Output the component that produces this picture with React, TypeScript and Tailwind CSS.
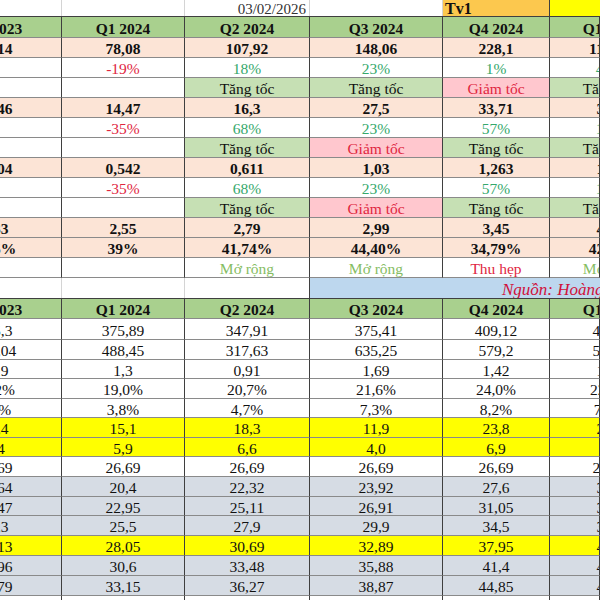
import React from 'react';

type Cell = {
  t?: string;
  bg?: string;
  fg?: string;
};

const COLS = ['w-[62px] shrink-0', 'w-[123px] shrink-0', 'w-[125px] shrink-0', 'w-[133px] shrink-0', 'w-[107px] shrink-0', 'flex-1 min-w-0'];

const GREEN_HDR = 'bg-[#a9d08e]';
const PINK = 'bg-[#fce4d6]';
const UP = 'bg-[#c6e0b4]';
const DOWN = 'bg-[#ffc7ce]';
const YEL = 'bg-[#ffff00]';
const GRAY = 'bg-[#d6dce4]';
const RED = 'text-[#e0263f]';
const TEAL = 'text-[#35a86c]';
const LIME = 'text-[#86bd63]';

const hdr = (first: string): Cell[] =>
  [first, 'Q1 2024', 'Q2 2024', 'Q3 2024', 'Q4 2024', 'Q1 2025'].map((t) => ({ t, bg: GREEN_HDR }));
const pink = (vals: string[]): Cell[] => vals.map((t) => ({ t, bg: PINK }));
const pct = (vals: string[]): Cell[] =>
  vals.map((t) => ({ t, fg: t.startsWith('-') ? RED : TEAL }));
const status = (vals: string[]): Cell[] =>
  vals.map((t) =>
    t === 'Tăng tốc' ? { t, bg: UP } : t === 'Giảm tốc' ? { t, bg: DOWN, fg: RED } : { t }
  );
const plain = (vals: string[], bg?: string): Cell[] => vals.map((t) => ({ t, bg }));

const top: Cell[][] = [
  hdr('Q4 2023'),
  pink(['96,14', '78,08', '107,92', '148,06', '228,1', '115,31']),
  pct(['', '-19%', '18%', '23%', '1%', '48%']),
  status(['', '', 'Tăng tốc', 'Tăng tốc', 'Giảm tốc', 'Tăng tốc']),
  pink(['22,46', '14,47', '16,3', '27,5', '33,71', '38,2']),
  pct(['', '-35%', '68%', '23%', '57%', '13%']),
  status(['', '', 'Tăng tốc', 'Giảm tốc', 'Tăng tốc', 'Tăng tốc']),
  pink(['0,704', '0,542', '0,611', '1,03', '1,263', '1,43']),
  pct(['', '-35%', '68%', '23%', '57%', '13%']),
  status(['', '', 'Tăng tốc', 'Giảm tốc', 'Tăng tốc', 'Tăng tốc']),
  pink(['2,33', '2,55', '2,79', '2,99', '3,45', '4,01']),
  pink(['38,5%', '39%', '41,74%', '44,40%', '34,79%', '42,1%']),
  [{ t: '' }, { t: '' }, { t: 'Mở rộng', fg: LIME }, { t: 'Mở rộng', fg: LIME }, { t: 'Thu hẹp', fg: RED }, { t: 'Mở rộng', fg: LIME }],
];

const bottom: { cells: Cell[]; h: string }[] = [
  { cells: plain(['345,3', '375,89', '347,91', '375,41', '409,12', '415,6']), h: 'h-[21px]' },
  { cells: plain(['402,04', '488,45', '317,63', '635,25', '579,2', '531,8']), h: 'h-[20px]' },
  { cells: plain(['1,19', '1,3', '0,91', '1,69', '1,42', '1,28']), h: 'h-[19px]' },
  { cells: plain(['18,2%', '19,0%', '20,7%', '21,6%', '24,0%', '22,3%']), h: 'h-[20px]' },
  { cells: plain(['3,5%', '3,8%', '4,7%', '7,3%', '8,2%', '7,6%']), h: 'h-[19px]' },
  { cells: plain(['14,4', '15,1', '18,3', '11,9', '23,8', '21,2'], YEL), h: 'h-[20px]' },
  { cells: plain(['5,4', '5,9', '6,6', '4,0', '6,9', '7,1'], YEL), h: 'h-[19px]' },
  { cells: plain(['26,69', '26,69', '26,69', '26,69', '26,69', '26,69']), h: 'h-[20px]' },
  { cells: plain(['18,64', '20,4', '22,32', '23,92', '27,6', '30,1'], GRAY), h: 'h-[20px]' },
  { cells: plain(['20,47', '22,95', '25,11', '26,91', '31,05', '33,9'], GRAY), h: 'h-[19px]' },
  { cells: plain(['22,3', '25,5', '27,9', '29,9', '34,5', '37,6'], GRAY), h: 'h-[20px]' },
  { cells: plain(['25,13', '28,05', '30,69', '32,89', '37,95', '41,4'], YEL), h: 'h-[20px]' },
  { cells: plain(['27,96', '30,6', '33,48', '35,88', '41,4', '45,2'], GRAY), h: 'h-[20px]' },
  { cells: plain(['30,79', '33,15', '36,27', '38,87', '44,85', '48,9'], GRAY), h: 'h-[20px]' },
  { cells: plain(['', '', '', '', '', '']), h: 'h-[20px]' },
];

function CellBox({ cell, col, bold }: { cell: Cell; col: number; bold?: boolean }) {
  const inner = (
    <span className={`whitespace-nowrap ${cell.fg ?? 'text-[#111]'} ${bold ? 'font-bold' : ''}`}>{cell.t}</span>
  );
  return (
    <div
      className={`${COLS[col]} h-full overflow-hidden border-r border-b border-r-[#3f3f3f] border-b-[#8a8a8a] ${cell.bg ?? 'bg-white'}`}
    >
      {col === 0 ? (
        <div className="w-[134px] ml-[-72px] h-full pt-[3px] flex items-center justify-center">{inner}</div>
      ) : col === 5 ? (
        <div className="w-[120px] h-full pt-[3px] flex items-center justify-center">{inner}</div>
      ) : (
        <div className="w-full h-full pt-[3px] flex items-center justify-center">{inner}</div>
      )}
    </div>
  );
}

export default function App() {
  return (
    <div
      className="w-[600px] h-[600px] overflow-hidden bg-white text-[15.5px] leading-none"
      style={{ fontFamily: '"Liberation Serif", serif' }}
    >
      {/* date row */}
      <div className="flex h-[17px] border-b border-b-[#3f3f3f]">
        <div className={`${COLS[0]} border-r border-r-[#d4d4d4]`} />
        <div className={`${COLS[1]} border-r border-r-[#d4d4d4]`} />
        <div className={`${COLS[2]} border-r border-r-[#d4d4d4] flex items-center justify-end pr-[3px] pt-[2px] text-[15px] text-[#333]`}>
          03/02/2026
        </div>
        <div className={`${COLS[3]} border-r border-r-[#d4d4d4]`} />
        <div className={`${COLS[4]} border-r border-r-[#3f3f3f] bg-[#fcc84e] flex items-center pl-[2px] pt-[2px] font-bold text-[16px] text-[#111]`}>
          Tv1
        </div>
        <div className={`${COLS[5]} ${YEL}`} />
      </div>

      {/* top block */}
      {top.map((row, i) => (
        <div key={i} className={`flex ${i === 0 ? 'h-[21px]' : 'h-[20px]'}`}>
          {row.map((c, j) => (
            <CellBox key={j} cell={c} col={j} bold={i === 0 || c.bg === PINK} />
          ))}
        </div>
      ))}

      {/* source row */}
      <div className="flex h-[21px] border-b border-b-[#3f3f3f]">
        <div className={`${COLS[0]} border-r border-r-[#d4d4d4]`} />
        <div className={`${COLS[1]} border-r border-r-[#d4d4d4]`} />
        <div className={`${COLS[2]} border-r border-r-[#3f3f3f]`} />
        <div className="flex-1 min-w-0 bg-[#bdd7ee] flex items-center pl-[192px] pt-[3px] overflow-hidden">
          <span className="whitespace-nowrap italic text-[17px] text-[#d0103a]">Nguồn: Hoàng Hải</span>
        </div>
      </div>

      {/* bottom block */}
      <div className="flex h-[20px]">
        {hdr('Q4 2023').map((c, j) => (
          <CellBox key={j} cell={c} col={j} bold />
        ))}
      </div>
      {bottom.map((row, i) => (
        <div key={i} className={`flex ${row.h}`}>
          {row.cells.map((c, j) => (
            <CellBox key={j} cell={c} col={j} />
          ))}
        </div>
      ))}
    </div>
  );
}
